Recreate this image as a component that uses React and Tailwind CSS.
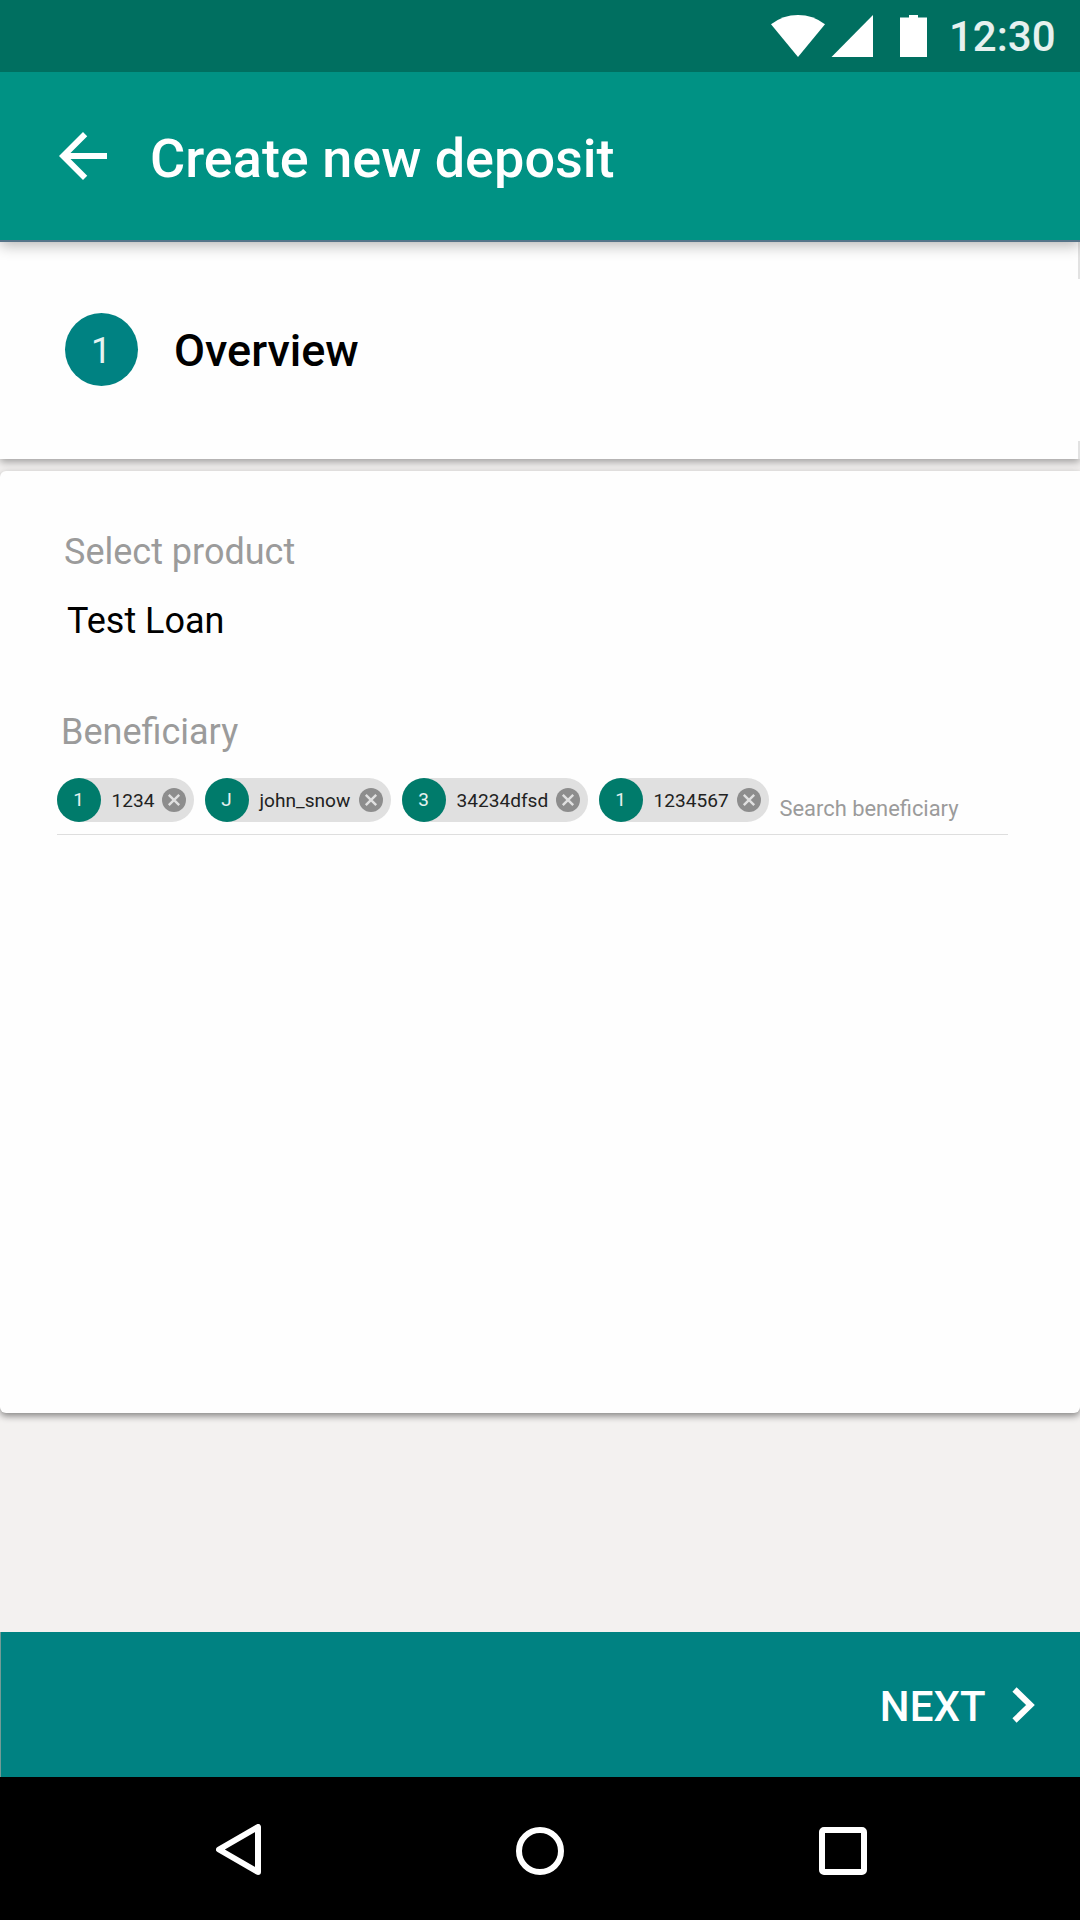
const beneficiaries = [
  { name: "1234", initial: "1", width: "w-[137px]" },
  { name: "john_snow", initial: "J", width: "w-[186px]" },
  { name: "34234dfsd", initial: "3", width: "w-[186px]" },
  { name: "1234567", initial: "1", width: "w-[170px]" },
];

function StatusBar() {
  return (
    <div className="relative z-20 flex h-[72px] items-start bg-[#006f60] pl-[771px]">
      <svg className="mt-[15px] h-[42px] w-[156px] shrink-0" viewBox="0 0 156 42" fill="#fff">
        <path d="M27 42 0 9.300Q12 0 27 0T54 9.300Z" />
        <path d="M60.500 42 102 0V42Z" />
        <path d="M129 42V2.500H138V0H147V2.500H156V42Z" />
      </svg>
      <span className="mt-[16px] ml-[22px] text-[42px] leading-[42px] font-medium text-white/90">12:30</span>
    </div>
  );
}

function AppBar() {
  return (
    <header className="relative z-10 flex h-[170px] items-start border-b-2 border-[#557489] bg-[#009284] pl-[47px] shadow-[0_3px_14px_rgba(0,0,0,0.3)]">
      <svg className="mt-[48px] size-[72px] shrink-0" viewBox="0 0 24 24" fill="#fff">
        <path d="M20 11H7.830l5.590-5.590L12 4l-8 8 8 8 1.410-1.410L7.830 13H20v-2z" />
      </svg>
      <h1 className="mt-[55px] ml-[31px] text-[54px] leading-[64px] font-medium text-white">Create new deposit</h1>
    </header>
  );
}

function StepHeader() {
  return (
    <section className="relative flex h-[217px] items-start bg-[#fefefe] pl-[64.5px] shadow-[0_3px_8px_rgba(0,0,0,0.35)]">
      <span className="mt-[71px] flex size-[73px] items-center justify-center rounded-full bg-[#008282] pt-[2px] text-[36px] text-white/90">1</span>
      <h2 className="mt-[82px] ml-[36.5px] text-[45px] leading-[54px] font-medium text-black">Overview</h2>
      <span className="absolute top-0 right-0 h-[37px] w-[2px] bg-[#e2e2e2]" />
      <span className="absolute right-0 bottom-0 h-[18px] w-[2px] bg-[#e2e2e2]" />
    </section>
  );
}

function Chip({ name, initial, width }) {
  return (
    <div className={`flex h-[44px] shrink-0 items-center rounded-full bg-[#e0e0e0] pr-[7.500px] ${width}`}>
      <span className="flex size-[44px] shrink-0 items-center justify-center rounded-full bg-[#007b6b] text-[19px] text-white/90">{initial}</span>
      <span className="ml-[11px] pt-px text-[19.100px] leading-[24px] text-[#222]">{name}</span>
      <svg className="ml-auto size-6 shrink-0" viewBox="0 0 24 24">
        <circle cx="12" cy="12" r="12" fill="#8d8d8d" />
        <path d="M6.800 6.800 17.200 17.200M17.200 6.800 6.800 17.200" stroke="#e0e0e0" strokeWidth="2.400" />
      </svg>
    </div>
  );
}

function DetailsCard() {
  return (
    <main className="relative mt-[12px] h-[942px] rounded-[6px] rounded-tr-none bg-[#fefefe] pl-[56.5px] shadow-[0_3px_7px_rgba(0,0,0,0.45)]">
      <p className="pt-[60px] pl-[7.500px] text-[36px] leading-[42px] text-[#9b9b9b]">Select product</p>
      <p className="mt-[27px] pl-[10.500px] text-[36px] leading-[42px] text-black">Test Loan</p>
      <p className="mt-[69px] pl-[4.500px] text-[36px] leading-[42px] text-[#9b9b9b]">Beneficiary</p>
      <div className="mt-[25px] flex h-[57px] w-[951px] items-start gap-[11px] border-b border-[#dedede]">
        {beneficiaries.map((b) => (
          <Chip key={b.name} {...b} />
        ))}
        <span className="mt-[18px] text-[21.900px] leading-[26px] text-[#9b9b9b]">Search beneficiary</span>
      </div>
    </main>
  );
}

function Footer() {
  return (
    <footer className="flex h-[145px] items-start justify-end border-l border-[#729b96] bg-[#008282]">
      <button className="flex text-[42px] leading-[50px] font-medium text-white">
        <span className="mt-[50px]">NEXT</span>
        <svg className="mt-[55px] mr-[45.500px] ml-[26px] h-9 w-[23px]" viewBox="0 0 23 36" fill="none">
          <path d="M2.500 2.500 18.500 18 2.500 33.500" stroke="#fff" strokeWidth="6" />
        </svg>
      </button>
    </footer>
  );
}

function NavigationBar() {
  return (
    <nav className="flex h-[143px] bg-black pt-[47px] pl-[216px]">
      <svg className="h-[51px] w-[45px]" viewBox="0 0 45 51" fill="none" stroke="#fff" strokeWidth="6" strokeLinejoin="round">
        <path d="M3 25.500 42 3V48Z" />
      </svg>
      <span className="mt-[3px] ml-[255px] size-12 rounded-full border-[6px] border-white" />
      <span className="mt-[3px] ml-[255px] size-12 rounded-[5px] border-[6px] border-white" />
    </nav>
  );
}

export default function App() {
  return (
    <div className="flex h-[1920px] w-[1080px] flex-col overflow-hidden bg-[#f3f1f0] font-['Roboto',sans-serif]">
      <StatusBar />
      <AppBar />
      <StepHeader />
      <DetailsCard />
      <div className="mt-auto">
        <Footer />
        <NavigationBar />
      </div>
    </div>
  );
}
